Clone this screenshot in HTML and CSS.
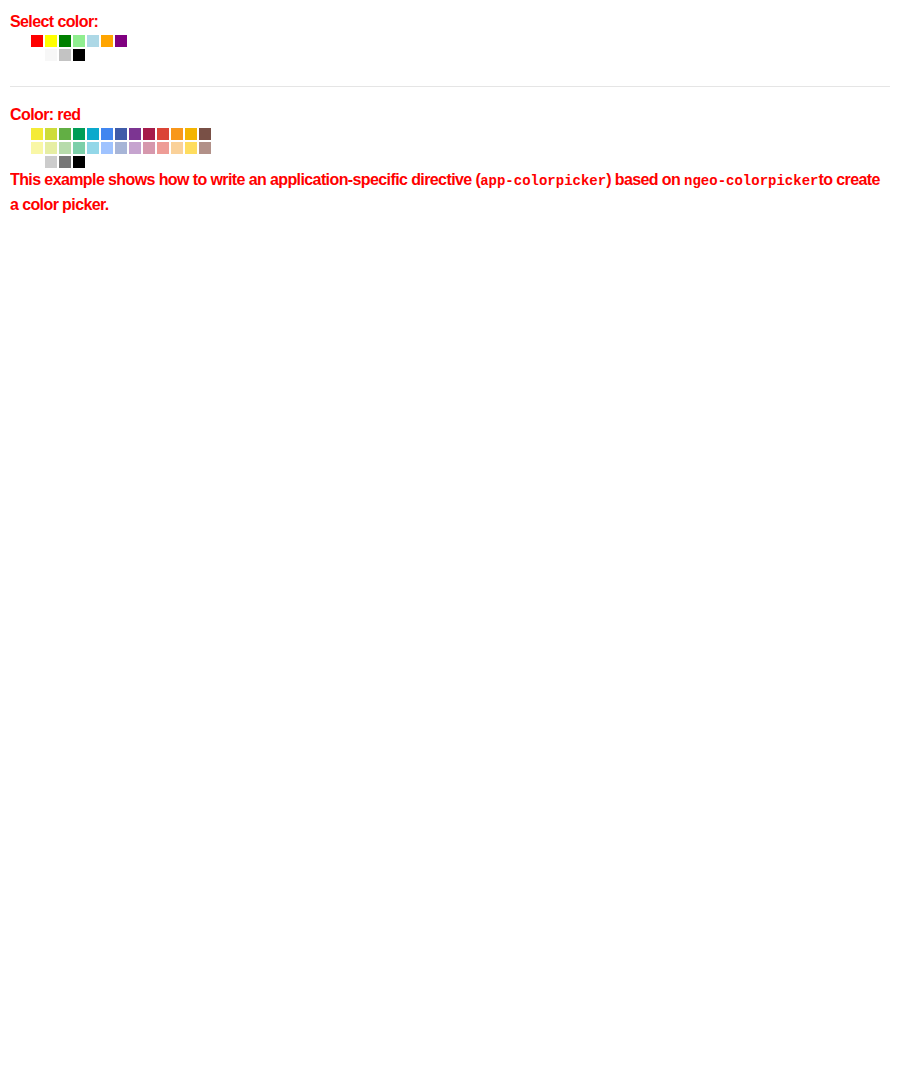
FILE: index.html
```html
<!DOCTYPE html>
<html>
<head>
<meta charset="utf-8">
<link rel="stylesheet" href="styles.css">
</head>
<body>
<div class="picker">
  <div class="label">Select color:</div>
  <div class="palette">
    <div class="row">
      <span class="sw" style="background:red"></span><span class="sw" style="background:yellow"></span><span class="sw" style="background:green"></span><span class="sw" style="background:lightgreen"></span><span class="sw" style="background:lightblue"></span><span class="sw" style="background:orange"></span><span class="sw" style="background:purple"></span>
    </div>
    <div class="row">
      <span class="sw" style="background:#ffffff"></span><span class="sw" style="background:#f7f7f7"></span><span class="sw" style="background:#c3c3c3"></span><span class="sw" style="background:#000000"></span>
    </div>
  </div>
</div>
<hr class="sep">
<div class="picker">
  <div class="label">Color: red</div>
  <div class="palette">
    <div class="row">
      <span class="sw" style="background:#F4EB37"></span><span class="sw" style="background:#CDDC39"></span><span class="sw" style="background:#62AF44"></span><span class="sw" style="background:#009D57"></span><span class="sw" style="background:#0BA9CC"></span><span class="sw" style="background:#4186F0"></span><span class="sw" style="background:#3F5BA9"></span><span class="sw" style="background:#7C3592"></span><span class="sw" style="background:#A61B4A"></span><span class="sw" style="background:#DB4436"></span><span class="sw" style="background:#F8971B"></span><span class="sw" style="background:#F4B400"></span><span class="sw" style="background:#795046"></span>
    </div>
    <div class="row">
      <span class="sw" style="background:#F9F7A6"></span><span class="sw" style="background:#E6EEA3"></span><span class="sw" style="background:#B7DBAB"></span><span class="sw" style="background:#7CCFA9"></span><span class="sw" style="background:#93D7E8"></span><span class="sw" style="background:#9FC3FF"></span><span class="sw" style="background:#A7B5D7"></span><span class="sw" style="background:#C6A4CF"></span><span class="sw" style="background:#D698AD"></span><span class="sw" style="background:#EE9C96"></span><span class="sw" style="background:#FAD199"></span><span class="sw" style="background:#FFDD5E"></span><span class="sw" style="background:#B29189"></span>
    </div>
    <div class="row">
      <span class="sw" style="background:#ffffff"></span><span class="sw" style="background:#CCCCCC"></span><span class="sw" style="background:#777777"></span><span class="sw" style="background:#000000"></span>
    </div>
  </div>
</div>
<p class="desc">This example shows how to write an application-specific directive (<code>app-colorpicker</code>) based on <code>ngeo-colorpicker</code>to create a color picker.</p>
</body>
</html>
```
FILE: styles.css
```css
body {
  margin: 10px;
  font-family: "Liberation Sans", Arial, sans-serif;
  font-size: 16px;
  font-weight: bold;
  letter-spacing: -0.6px;
  color: #ff0000;
  line-height: 24px;
}
.picker {
  display: flex;
  flex-direction: column;
}
.label {
  height: 25px;
}
.palette {
  display: flex;
  flex-direction: column;
  gap: 2px;
  padding-left: 21px;
}
.row {
  display: flex;
  gap: 2px;
}
.sw {
  width: 12px;
  height: 12px;
}
.sep {
  border: 0;
  border-top: 1px solid #e5e5e5;
  margin: 25px 0 16px;
}
.desc {
  margin: 0;
}
code {
  font-family: "Liberation Mono", "Courier New", monospace;
  font-size: 14px;
  letter-spacing: 0;
}
```
